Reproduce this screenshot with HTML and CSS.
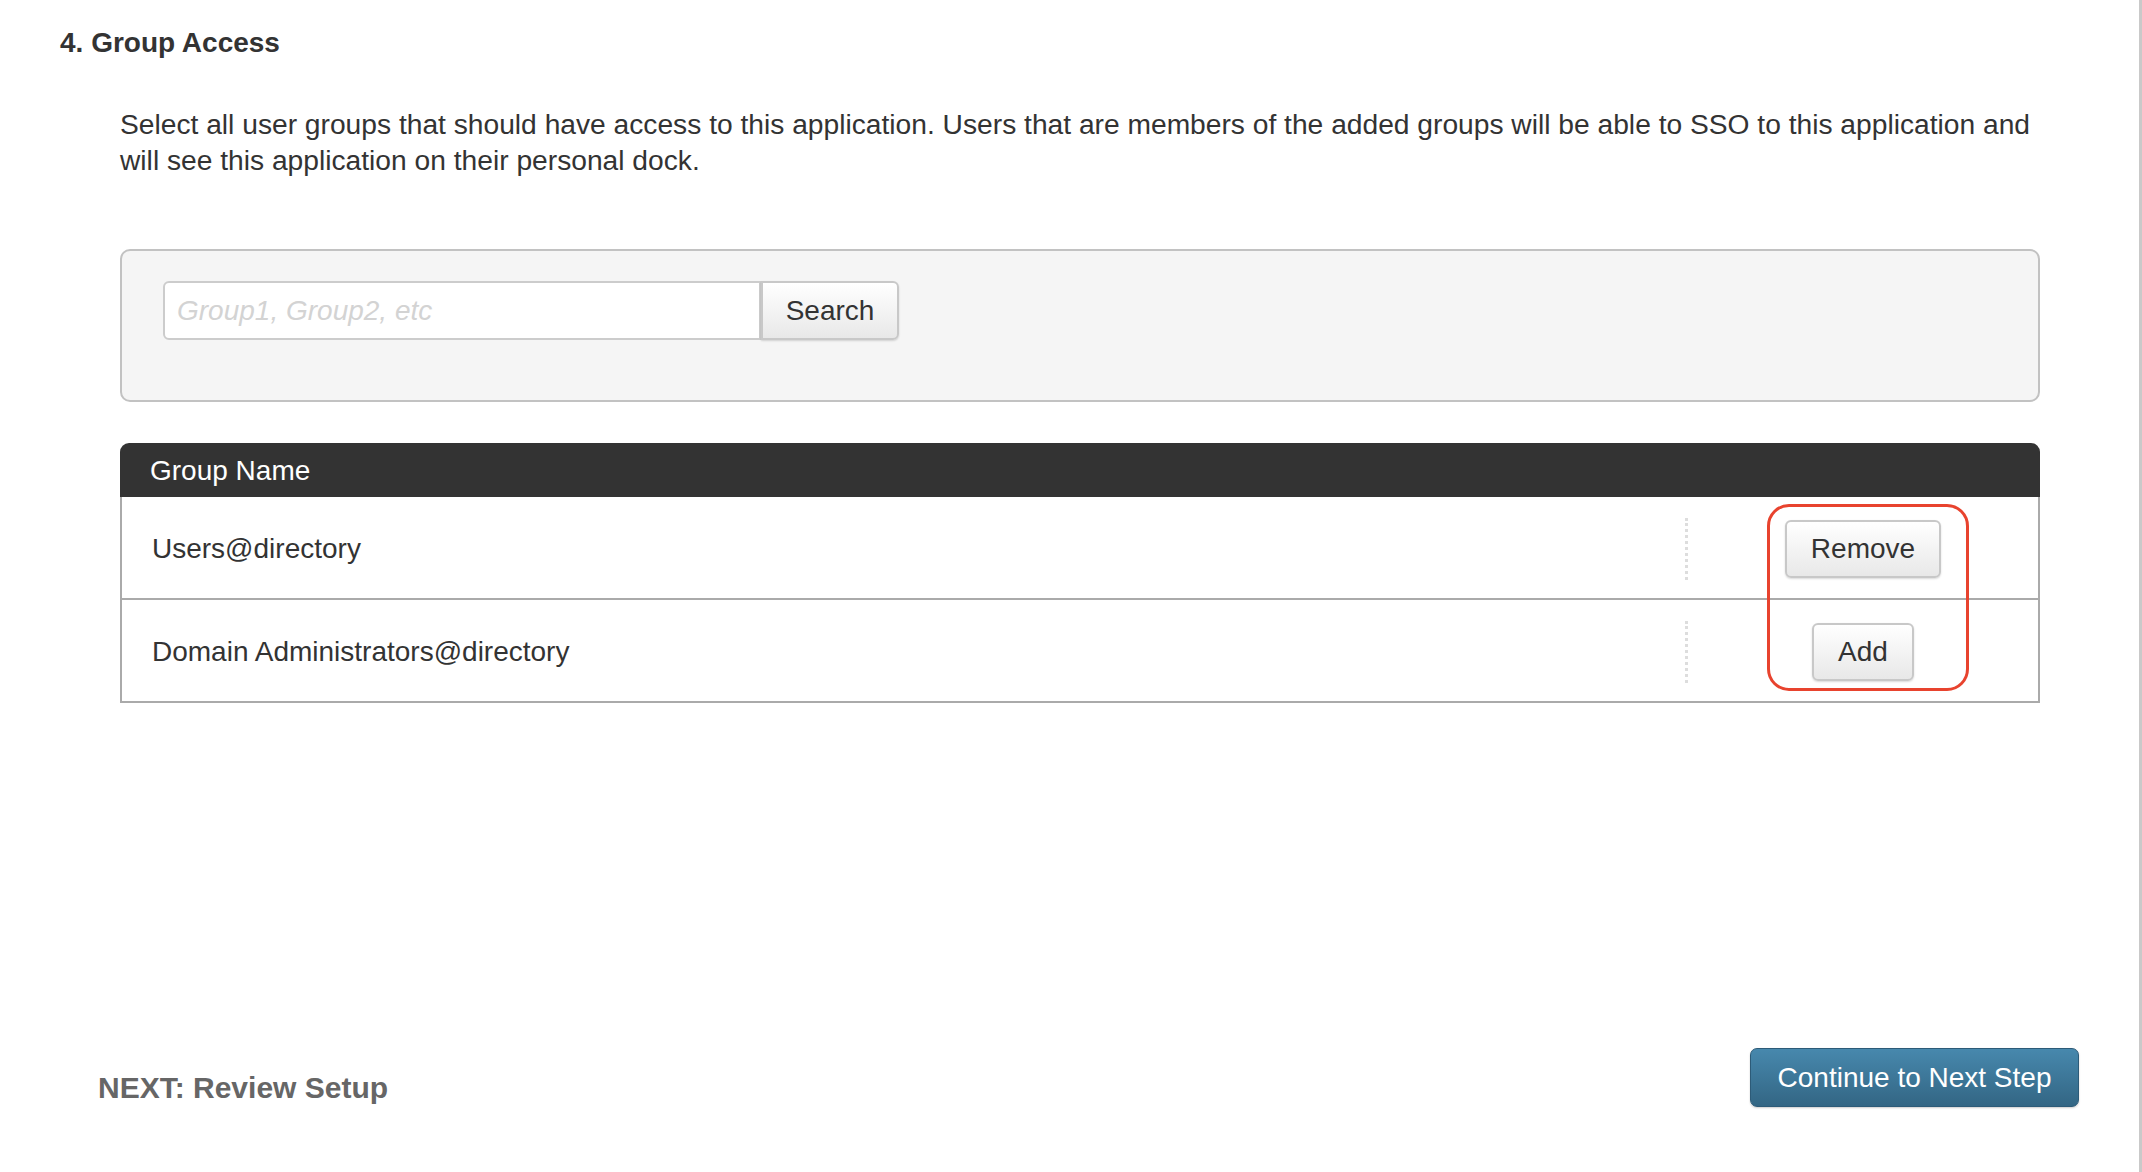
FILE: index.html
```html
<!DOCTYPE html>
<html lang="en">
<head>
<meta charset="utf-8">
<title>Group Access</title>
<link rel="stylesheet" href="styles.css">
</head>
<body>
<div class="page">
  <h2 class="title">4. Group Access</h2>
  <div class="content">
    <p class="intro">Select all user groups that should have access to this application. Users that are members of the added groups will be able to SSO to this application and will see this application on their personal dock.</p>

    <div class="search-panel">
      <div class="search-group">
        <input class="search-input" type="text" placeholder="Group1, Group2, etc">
        <button class="btn btn-search" type="button">Search</button>
      </div>
    </div>

    <div class="groups">
      <div class="groups-head">Group Name</div>
      <div class="row">
        <div class="name">Users@directory</div>
        <div class="sep"></div>
        <div class="act"><button class="btn" type="button">Remove</button></div>
      </div>
      <div class="row">
        <div class="name">Domain Administrators@directory</div>
        <div class="sep"></div>
        <div class="act"><button class="btn" type="button">Add</button></div>
      </div>
      <div class="highlight"></div>
    </div>
  </div>

  <div class="footer">
    <div class="next">NEXT: Review Setup</div>
    <button class="btn-primary" type="button">Continue to Next Step</button>
  </div>
</div>
</body>
</html>
```

FILE: styles.css
```css
* { box-sizing: border-box; }

html, body {
  margin: 0;
  padding: 0;
  background: #ffffff;
}

body {
  font-family: "Liberation Sans", Arial, Helvetica, sans-serif;
  color: #333333;
}

.page {
  height: 1172px;
  border-right: 3px solid #c9c9c9;
  padding-top: 26px;
  display: flex;
  flex-direction: column;
}

.title {
  margin: 0 0 0 60px;
  font-size: 28px;
  line-height: 34px;
  font-weight: bold;
  color: #333333;
}

.content {
  margin-left: 120px;
  width: 1920px;
}

.intro {
  margin: 46px 0 0 0;
  font-size: 28.2px;
  line-height: 36px;
  color: #333333;
}

.search-panel {
  margin-top: 71px;
  height: 153px;
  background: #f5f5f5;
  border: 2px solid #c2c2c2;
  border-radius: 10px;
  padding: 30px 0 0 41px;
}

.search-group {
  display: flex;
}

.search-input {
  width: 598px;
  height: 59px;
  border: 2px solid #cccccc;
  border-radius: 6px 0 0 6px;
  background: #ffffff;
  padding: 0 12px;
  font-family: "Liberation Sans", Arial, sans-serif;
  font-size: 28px;
  color: #333333;
  outline: none;
}

.search-input::placeholder {
  color: #d3d3d3;
  font-style: italic;
}

.btn {
  height: 58px;
  padding: 0 24px;
  border: 2px solid #c8c8c8;
  border-radius: 6px;
  background: linear-gradient(#ffffff, #e8e8e8);
  box-shadow: 0 1px 2px rgba(0, 0, 0, 0.15);
  font-family: "Liberation Sans", Arial, sans-serif;
  font-size: 28px;
  color: #333333;
  cursor: pointer;
}

.btn-search {
  height: 59px;
  width: 138px;
  padding: 0;
  border-radius: 0 6px 6px 0;
}

.groups {
  position: relative;
  margin-top: 41px;
}

.groups-head {
  height: 54px;
  background: #333333;
  border-radius: 9px 9px 0 0;
  color: #ffffff;
  font-size: 28px;
  line-height: 56px;
  padding-left: 30px;
}

.row {
  display: flex;
  align-items: center;
  height: 103px;
  padding-top: 2px;
  border-left: 2px solid #aaaaaa;
  border-right: 2px solid #aaaaaa;
  border-bottom: 2px solid #aaaaaa;
}

.name {
  flex: 1;
  padding-left: 30px;
  font-size: 28px;
  color: #333333;
}

.sep {
  width: 3px;
  height: 62px;
  border-left: 3px dotted #dddddd;
}

.act {
  width: 350px;
  display: flex;
  justify-content: center;
  align-items: center;
}

.highlight {
  position: absolute;
  left: 1647px;
  top: 61px;
  width: 202px;
  height: 187px;
  border: 3px solid #e8432e;
  border-radius: 22px;
  pointer-events: none;
}

.footer {
  margin-top: 345px;
  margin-left: 98px;
  width: 1981px;
  display: flex;
  justify-content: space-between;
  align-items: center;
}

.next {
  margin-top: 20px;
  font-size: 30px;
  font-weight: bold;
  color: #666666;
  letter-spacing: 0;
}

.btn-primary {
  width: 329px;
  height: 59px;
  border: 1px solid #2d5b78;
  border-radius: 7px;
  background: linear-gradient(#4788ad, #336684);
  box-shadow: 0 1px 2px rgba(0, 0, 0, 0.2);
  color: #ffffff;
  font-family: "Liberation Sans", Arial, sans-serif;
  font-size: 28px;
  padding: 0;
  cursor: pointer;
}
```
